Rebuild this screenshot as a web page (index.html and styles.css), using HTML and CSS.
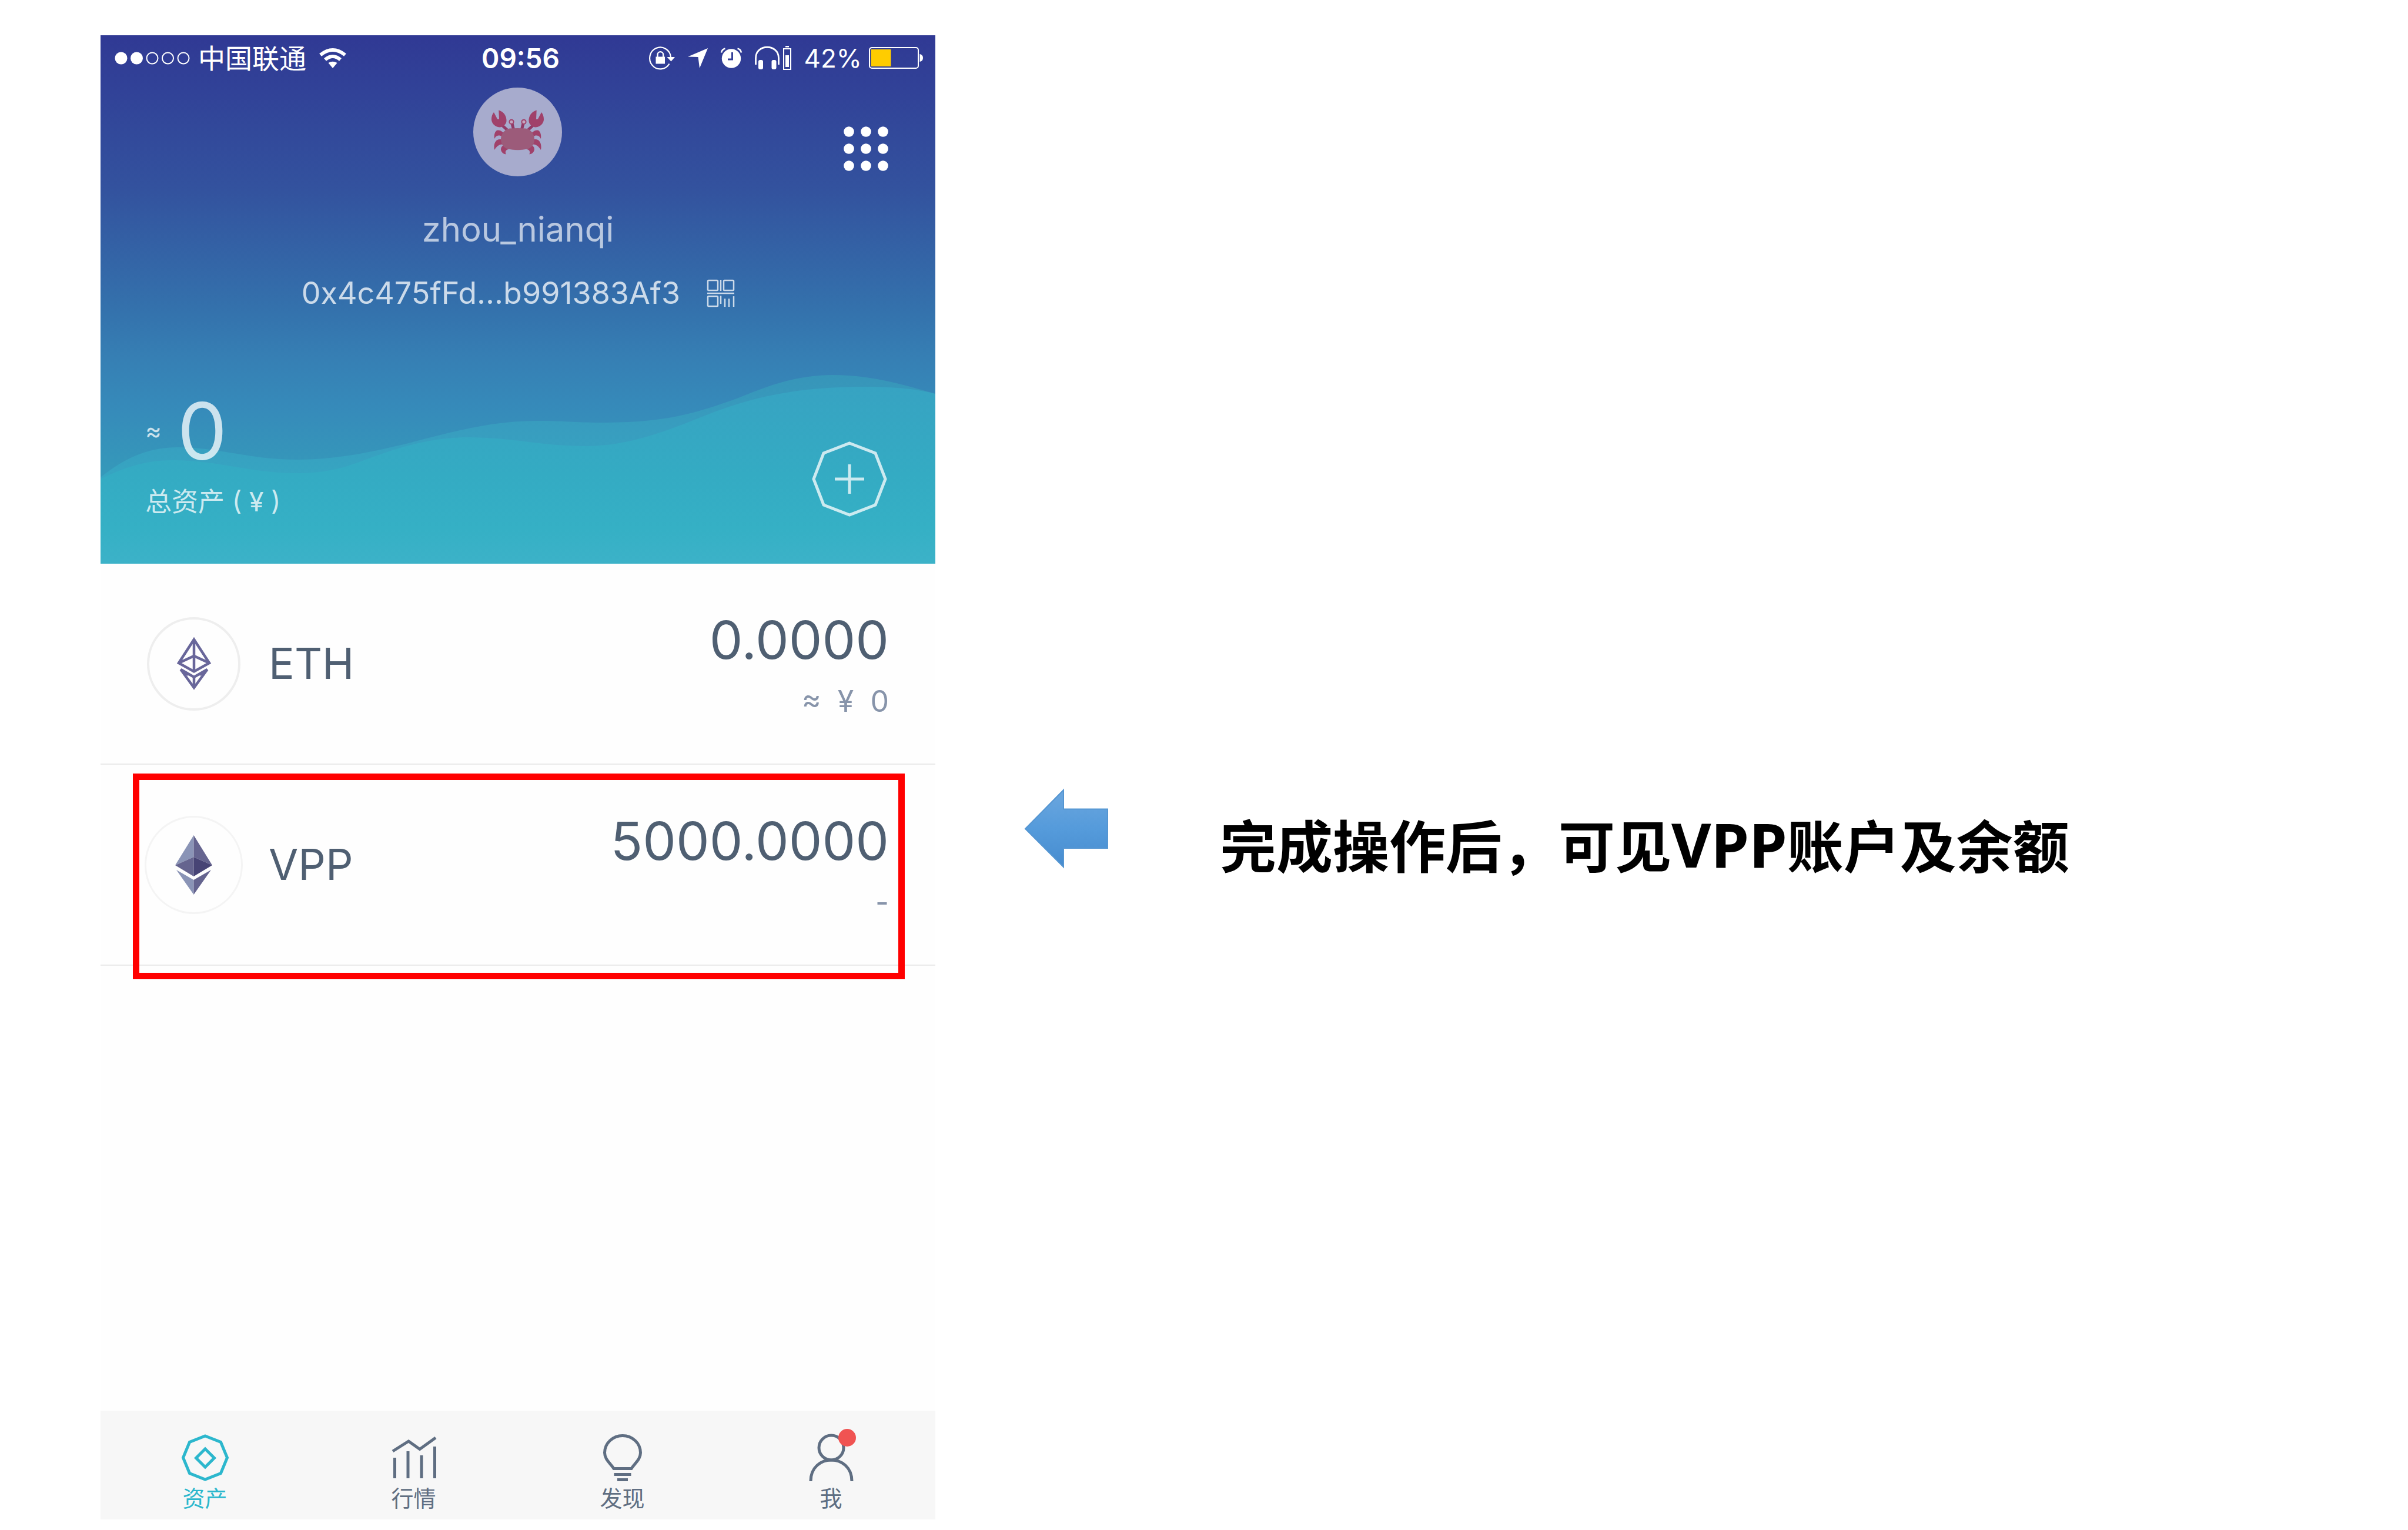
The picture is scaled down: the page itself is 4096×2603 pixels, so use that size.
FILE: index.html
```html
<!DOCTYPE html>
<html lang="zh-CN">
<head>
<meta charset="utf-8">
<meta name="viewport" content="width=device-width, initial-scale=1">
<title>资产</title>
<link rel="stylesheet" href="styles.css">
</head>
<body>
<main class="slide">
  <section class="phone">
    <header class="hero">
      <svg class="waves" viewBox="0 0 1420 899" preserveAspectRatio="none" aria-hidden="true">
        <defs>
          <linearGradient id="waveBack" gradientUnits="userSpaceOnUse" x1="0" y1="578" x2="0" y2="760">
            <stop offset="0" stop-color="#3795b9"/><stop offset=".5" stop-color="#389dbf"/><stop offset="1" stop-color="#36a6c2"/>
          </linearGradient>
          <linearGradient id="waveFront" gradientUnits="userSpaceOnUse" x1="0" y1="598" x2="0" y2="899">
            <stop offset="0" stop-color="#37a3c2"/><stop offset=".5" stop-color="#34abc3"/><stop offset=".8" stop-color="#35b0c5"/><stop offset="1" stop-color="#3cb2c8"/>
          </linearGradient>
        </defs>
        <path fill="url(#waveBack)" d="M0 752C40 720 80 701 132 701C200 701 255 722 333 722C405 722 465 708 524 694C600 674 665 656 743 656C790 656 810 659 853 659C960 659 1010 644 1085 617C1130 599 1180 578 1245 578C1310 578 1365 594 1420 610V899H0Z"/>
        <path fill="url(#waveFront)" d="M0 755C38 736 75 723 123 723C200 723 255 745 333 745C400 745 430 729 470 715C520 697 570 684 625 684C700 684 750 699 825 699C900 699 965 672 1026 648C1100 618 1180 598 1299 598C1345 598 1385 601 1420 610V899H0Z"/>
      </svg>

      <div class="status">
        <div class="status-left">
          <svg class="signal" viewBox="0 0 128 22" aria-hidden="true">
            <circle cx="11" cy="11" r="10.500" fill="#fff"/><circle cx="37.500" cy="11" r="10.500" fill="#fff"/>
            <g fill="none" stroke="#fff" stroke-width="2"><circle cx="64" cy="11" r="9.500"/><circle cx="90.500" cy="11" r="9.500"/><circle cx="117" cy="11" r="9.500"/></g>
          </svg>
          <span class="carrier">中国联通</span>
          <svg class="wifi" viewBox="0 0 46 34" aria-hidden="true">
            <path fill="none" stroke="#fff" stroke-width="6" d="M2 11.500Q23-5.500 44 11.500M10 19.500Q23 8.500 36 19.500"/>
            <path fill="#fff" d="M15.500 25Q23 20.500 30.500 25L23 34Z"/>
          </svg>
        </div>
        <time class="clock">09:56</time>
        <div class="status-right">
          <svg class="lock" viewBox="0 0 44 39" aria-hidden="true">
            <path fill="none" stroke="#fff" stroke-width="2.200" d="M37 18A18 18.500 0 1 0 34.500 29.500"/>
            <path fill="#fff" d="M30.500 18H44L37.500 25.500ZM11.500 17.500H27V29.500H11.500Z"/>
            <path fill="none" stroke="#fff" stroke-width="2.400" d="M14.500 18V14A4.800 4.800 0 0 1 24.200 14V18"/>
          </svg>
          <svg class="locate" viewBox="0 0 34 34" aria-hidden="true"><path fill="#fff" d="M34 0L20 34L17.500 15L0 14.500Z"/></svg>
          <svg class="alarm" viewBox="0 0 36 35" aria-hidden="true">
            <circle cx="18" cy="18.500" r="16.200" fill="#fff"/>
            <path fill="none" stroke="#fff" stroke-width="2.600" d="M1 8.500Q2 3 7.500 1.500M35 8.500Q34 3 28.500 1.500"/>
            <path fill="none" stroke="#343f98" stroke-width="3" d="M19.500 8V20H12"/>
          </svg>
          <span class="headset">
            <svg class="phones" viewBox="0 0 42 39" aria-hidden="true">
              <path fill="none" stroke="#fff" stroke-width="2.800" d="M1.500 31V20C1.500-5 40.500-5 40.500 20V31"/>
              <rect x="6" y="23" width="8" height="16" rx="3" fill="#fff"/><rect x="28.500" y="23" width="8" height="16" rx="3" fill="#fff"/>
            </svg>
            <svg class="cell" viewBox="0 0 14 41" aria-hidden="true">
              <path fill="#fff" d="M4 0H10V2.500H4ZM4 16H10V36H4Z"/><rect x="1" y="5" width="12" height="35" fill="none" stroke="#fff" stroke-width="2"/>
            </svg>
          </span>
          <span class="power">42%
            <svg class="battery" viewBox="0 0 92 37" aria-hidden="true">
              <rect x="1" y="1" width="83" height="35" rx="4" fill="none" stroke="#fff" stroke-width="2"/>
              <rect x="3.500" y="4" width="34" height="29" fill="#fc0"/><path fill="#fff" d="M86.500 12Q92 13 92 18.500Q92 24 86.500 25Z"/>
            </svg>
          </span>
        </div>
      </div>

      <div class="profile">
        <div class="identity">
          <svg class="avatar" viewBox="0 0 151 151" role="img" aria-label="头像">
            <circle cx="75.500" cy="75.500" r="75.500" fill="#a7abcd"/>
            <defs>
              <g id="crabHalf">
                <path fill="none" stroke="#913a66" stroke-width="5" d="M50 65L61 75M66 61L69 73"/>
                <path fill="#a0416a" d="M35 42L41 53.500L44 54L43.300 38.600C52 41 57 49 56.500 57C56 63 50 67.500 45 67.500C36 67 31 60 31 54C31 49 32.500 45 35 42Z"/>
                <circle cx="65" cy="58.300" r="3.600" fill="#c3a6c0" stroke="#a0416a" stroke-width="2"/>
                <path fill="#a0416a" d="M36 87C35 80 37 73 42 72.500C48 72.500 52 77 55 82L52 88C48 82 46 81 43 81.500C39 82 38 84 36 87ZM36 106C34 96 38 88 45 88C49 87.500 52 89 54 90L53 97C47 95.500 41 98 36 106ZM52 98L60 105C55 106 54 109 55.500 113.500C50 113 47 108 47 105C47 102 49 99 52 98Z"/>
              </g>
            </defs>
            <use href="#crabHalf"/><use href="#crabHalf" transform="translate(151 0) scale(-1 1)"/>
            <path fill="#9c5b7a" d="M62 69.500Q75.500 68.500 89 69.500C98 71 104 79 104 88C104 96 100 102 92 104.500Q75.500 108 59 104.500C51 102 47 96 47 88C47 79 53 71 62 69.500Z"/>
          </svg>
          <h1 class="name">zhou_nianqi</h1>
          <div class="address">
            <span>0x4c475fFd...b991383Af3</span>
            <button class="qr" type="button" aria-label="二维码">
              <svg viewBox="0 0 46 46" aria-hidden="true">
                <g fill="none" stroke="currentColor" stroke-width="2.500"><rect x="1" y="1" width="17" height="17" rx="1"/><rect x="28" y="1" width="17" height="17" rx="1"/><rect x="1" y="28" width="17" height="17" rx="1"/><path d="M23 0V19M0 23H46M23 27V41M30 32V46M37 32V46M45 28V46"/></g>
              </svg>
            </button>
          </div>
        </div>
        <button class="menu" type="button" aria-label="菜单">
          <svg viewBox="0 0 76 76" aria-hidden="true"><g fill="#fff">
            <circle cx="9" cy="9" r="8.800"/><circle cx="38" cy="9" r="8.800"/><circle cx="67" cy="9" r="8.800"/>
            <circle cx="9" cy="38" r="8.800"/><circle cx="38" cy="38" r="8.800"/><circle cx="67" cy="38" r="8.800"/>
            <circle cx="9" cy="67" r="8.800"/><circle cx="38" cy="67" r="8.800"/><circle cx="67" cy="67" r="8.800"/>
          </g></svg>
        </button>
      </div>

      <div class="total">
        <div>
          <p class="total-value"><span class="approx">≈</span>0</p>
          <p class="total-label">总资产 ( ¥ )</p>
        </div>
        <button class="add" type="button" aria-label="添加资产">
          <svg viewBox="0 0 128 128" aria-hidden="true"><path fill="none" stroke="currentColor" stroke-width="5" d="M64 3L108 20L125 64L108 108L64 125L20 108L3 64L20 20ZM64 39V89M39 64H89"/></svg>
        </button>
      </div>
    </header>

    <ul class="assets">
      <li class="asset">
        <span class="coin">
          <svg class="coin-line" viewBox="0 0 58 91" aria-hidden="true"><g fill="none" stroke="#68669a" stroke-width="4.500">
            <path d="M29 4L55 44L29 58.500L3 44ZM29 4V58.500M3 44L29 32L55 44"/>
            <path d="M6.500 55L29 68L51.500 55L29 86ZM29 68V86"/><path d="M10 59L20 64M48 59L38 64"/></g></svg>
        </span>
        <span class="symbol">ETH</span>
        <span class="figures"><span class="amount">0.0000</span><span class="worth">≈&nbsp; ¥&nbsp; 0</span></span>
      </li>
      <li class="asset marked">
        <span class="coin coin-large">
          <svg class="coin-solid" viewBox="0 0 63 101" aria-hidden="true">
            <path fill="#8a94b6" d="M31.500 0V37L0 51ZM2 59L31.500 76V101Z"/>
            <path fill="#65648f" d="M31.500 0V37L63 51ZM61 59L31.500 76V101ZM0 51L31.500 37V70Z"/>
            <path fill="#474475" d="M31.500 37L63 51L31.500 70Z"/>
          </svg>
        </span>
        <span class="symbol">VPP</span>
        <span class="figures"><span class="amount">5000.0000</span><span class="worth">-</span></span>
      </li>
    </ul>

    <nav class="tabs">
      <a class="tab active" href="#assets">
        <svg viewBox="0 0 80 80" aria-hidden="true"><path d="M40 3L66.500 13.500L77.500 40L66.500 66.500L40 77L13.500 66.500L2.500 40L13.500 13.500ZM40 25L55.500 40.500L40 56L24.500 40.500Z"/></svg>
        资产</a>
      <a class="tab" href="#market">
        <svg viewBox="0 0 80 80" aria-hidden="true"><path d="M7.500 40V75M30 29V75M53 36V75M75.500 21V75M4 29L31 12L50 25.500L77 6"/></svg>
        行情</a>
      <a class="tab" href="#discover">
        <svg viewBox="0 0 80 80" aria-hidden="true"><path d="M25 58.500C19 49 9.500 43 9.500 31.500A30.500 29 0 0 1 70.500 31.500C70.500 43 61 49 55 58.500ZM25.500 68.500H54.500M31 77.500H49"/></svg>
        发现</a>
      <a class="tab" href="#me">
        <svg viewBox="0 0 80 80" aria-hidden="true"><circle cx="40" cy="23" r="21"/><path d="M5 80C5 32 75 32 75 80"/><circle class="badge" cx="67" cy="6" r="15"/></svg>
        我</a>
    </nav>
  </section>

  <aside class="note">
    <svg class="arrow" viewBox="0 0 143 137" aria-hidden="true">
      <defs><linearGradient id="arrowFill" x1="0" y1="0" x2="0" y2="1"><stop offset="0" stop-color="#6ba6de"/><stop offset=".5" stop-color="#559bdb"/><stop offset="1" stop-color="#478ccf"/></linearGradient></defs>
      <path fill="url(#arrowFill)" stroke="#5596d2" stroke-width="2" d="M2 69L67 3V35.500H142V102H67V134Z"/>
    </svg>
    <p class="note-text">完成操作后，可见<span class="ticker">VPP</span>账户及余额</p>
  </aside>
</main>
</body>
</html>
```
FILE: styles.css
```css
* { box-sizing: border-box; }
body { margin: 0; background: #fff; font-family: Inter, "Noto Sans CJK SC", sans-serif; }
h1, p, ul { margin: 0; padding: 0; }
svg { display: block; overflow: visible; }
button { padding: 0; border: 0; background: none; color: inherit; font: inherit; }

.slide {
  display: grid;
  grid-template-columns: minmax(0, 1420fr) minmax(0, 2334fr);
  min-height: 100vh;
  padding: 60px 171px 18px;
}
.phone { display: flex; flex-direction: column; background: #fefefe; }

.hero {
  position: relative;
  isolation: isolate;
  padding-bottom: 75px;
  background: linear-gradient(#303994 0, #33529e 29%, #3473ad 53%, #367fb4 61%, #368bba 71%, #3599ba 83%, #3cb2c8 100%);
  color: rgba(255, 255, 255, .75);
}
.waves { position: absolute; inset: 0; z-index: -1; width: 100%; height: 100%; }

.status {
  display: grid;
  grid-template-columns: 1fr auto 1fr;
  align-items: center;
  height: 77px;
  padding: 0 21px 0 24px;
  color: #fff;
  font-size: 46px;
  line-height: 60px;
}
.status-left, .status-right, .headset, .power { display: flex; align-items: center; }
.status-left { gap: 14px; }
.status-right { justify-content: flex-end; gap: 22px; }
.headset { gap: 6px; }
.power { gap: 12px; font-size: 44px; }
.clock { margin-left: 6px; font-weight: 600; }
.signal { width: 128px; height: 22px; }
.wifi { width: 46px; height: 34px; margin-left: 8px; }
.lock { width: 44px; height: 39px; }
.locate { width: 34px; height: 34px; }
.alarm { width: 36px; height: 35px; }
.phones { width: 42px; height: 39px; }
.cell { width: 14px; height: 41px; }
.battery { width: 92px; height: 37px; }

.profile {
  display: grid;
  grid-template-columns: 1fr auto 1fr;
  align-items: start;
  padding: 12px 80px 0;
}
.identity { grid-column: 2; display: flex; flex-direction: column; align-items: center; }
.avatar { width: 151px; height: 151px; }
.name { margin-top: 50px; font-size: 58px; font-weight: 400; line-height: 80px; color: rgba(255, 255, 255, .66); }
.address { display: flex; align-items: center; gap: 46px; margin-top: 39px; font-size: 52px; line-height: 60px; }
.qr svg { width: 46px; height: 46px; }
.menu { justify-self: end; margin-top: 66px; }
.menu svg { width: 76px; height: 76px; }

.total {
  display: flex;
  justify-content: space-between;
  align-items: flex-end;
  margin-top: 137px;
  padding: 0 82px 0 76px;
}
.total-value { display: flex; align-items: center; gap: 27px; font-size: 134px; line-height: 134px; }
.approx { font-size: 42px; }
.total-label { margin-top: 26px; padding-bottom: 2px; font-size: 45px; line-height: 56px; }
.add { margin-bottom: 5px; }
.add svg { width: 128px; height: 128px; }

.assets { list-style: none; }
.asset {
  position: relative;
  display: flex;
  align-items: center;
  height: 342px;
  padding: 0 79px 0 75px;
  border-bottom: 2px solid #eaeaea;
  color: #4f5f72;
}
.coin {
  display: grid;
  place-items: center;
  width: 159px;
  height: 159px;
  margin: 0 4px;
  border: 4px solid #eee;
  border-radius: 50%;
}
.coin-large { width: 167px; height: 167px; margin: 0; border: 3px solid #f4f4f4; }
.coin-line { width: 58px; height: 91px; }
.coin-solid { width: 63px; height: 101px; }
.symbol { margin-left: 44px; font-size: 73px; line-height: 90px; }
.figures {
  display: flex;
  flex-direction: column;
  align-items: flex-end;
  align-self: flex-start;
  margin-left: auto;
  padding-top: 78px;
}
.amount { font-size: 90px; line-height: 104px; }
.worth { font-size: 50px; line-height: 104px; color: #8794aa; }
.marked::after {
  content: "";
  position: absolute;
  inset: 15px 52px -25px 55px;
  border: 11px solid #f00;
}

.tabs {
  display: grid;
  grid-template-columns: repeat(4, 1fr);
  margin-top: auto;
  height: 185px;
  background: #f7f7f7;
}
.tab {
  display: flex;
  flex-direction: column;
  align-items: center;
  gap: 6px;
  padding-top: 40px;
  color: #5f6e82;
  font-size: 38px;
  line-height: 46px;
  text-decoration: none;
}
.tab svg { width: 80px; height: 80px; fill: none; stroke: currentColor; stroke-width: 5; }
.tab .badge { fill: #f05352; stroke: none; }
.tab.active { color: #2cb7cd; }

.note { display: flex; align-items: flex-start; padding: 1281px 0 0 151px; }
.arrow { flex: none; width: 143px; height: 137px; }
.note-text {
  margin: 45px 0 0 190px;
  color: #000;
  font-family: "Noto Sans", "Noto Sans CJK SC", sans-serif;
  font-size: 96px;
  font-weight: 700;
  line-height: 100px;
  white-space: nowrap;
}
.ticker { font-size: 104px; }
```
